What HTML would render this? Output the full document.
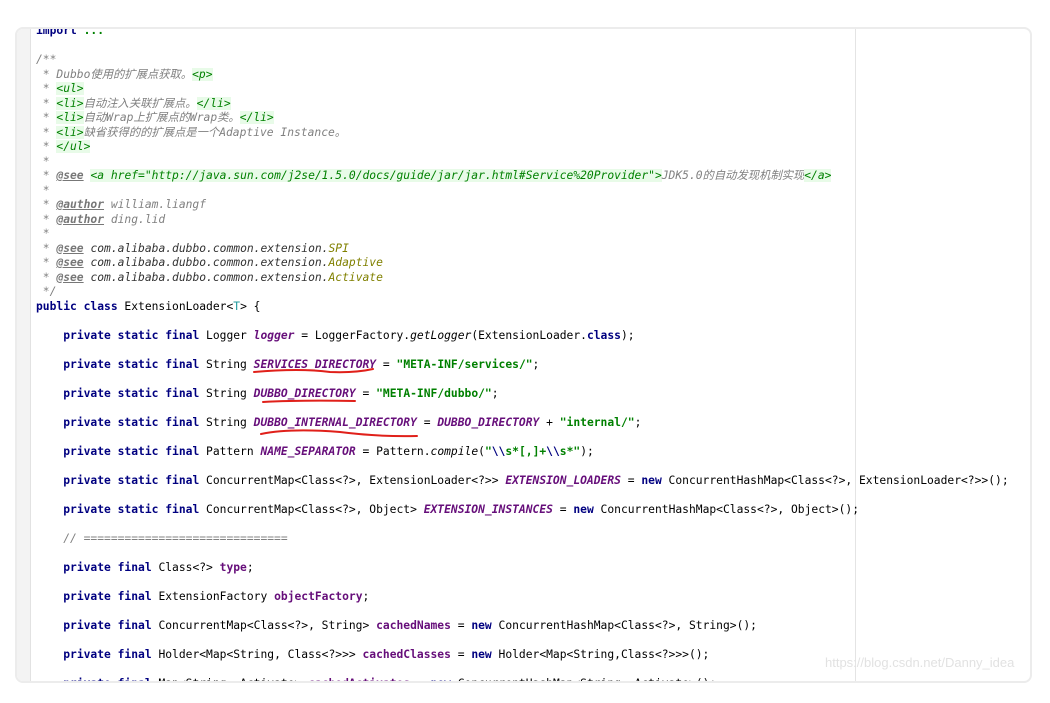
<!DOCTYPE html>
<html><head><meta charset="utf-8"><style>
html,body{margin:0;padding:0;background:#fff;width:1050px;height:703px;overflow:hidden}
.card{position:absolute;left:15px;top:27px;width:1013px;height:652px;border:2px solid #ececec;border-radius:8px;overflow:hidden;background:#fff}
.gut{position:absolute;left:0;top:0;width:13px;height:100%;background:#f3f3f3;border-right:1px solid #e2e2e2}
.rm{position:absolute;left:838px;top:0;width:1px;height:100%;background:#e4e4e4}
pre{position:absolute;left:19px;top:-5px;margin:0;font-family:"DejaVu Sans Mono","Liberation Mono","Noto Sans CJK SC",monospace;font-size:11.3px;line-height:14.5px;color:#000}
.k{color:#000080;font-weight:bold}
.c{color:#808080;font-style:italic}
.t{color:#008000;background:#e8fbe8;font-style:italic}
.tg{color:#777;font-style:italic;font-weight:bold;text-decoration:underline}
.cn{color:#660e7a;font-style:italic;font-weight:bold}
.s{color:#008000;font-weight:bold}
.f{color:#660e7a;font-weight:bold}
.y{color:#808000;font-style:italic}
.i{font-style:italic}
.wm{position:absolute;left:808px;top:626px;font-family:"Liberation Sans",sans-serif;font-size:13px;color:#e2e2e2}
</style></head><body>
<div class="card">
<div class="gut"></div><div class="rm"></div>
<pre><span class="k">import</span> <span class="s">...</span>

<span class="c">/**</span>
<span class="c"> * Dubbo使用的扩展点获取。<span class="t">&lt;p&gt;</span></span>
<span class="c"> * <span class="t">&lt;ul&gt;</span></span>
<span class="c"> * <span class="t">&lt;li&gt;</span>自动注入关联扩展点。<span class="t">&lt;/li&gt;</span></span>
<span class="c"> * <span class="t">&lt;li&gt;</span>自动Wrap上扩展点的Wrap类。<span class="t">&lt;/li&gt;</span></span>
<span class="c"> * <span class="t">&lt;li&gt;</span>缺省获得的的扩展点是一个Adaptive Instance。</span>
<span class="c"> * <span class="t">&lt;/ul&gt;</span></span>
<span class="c"> *</span>
<span class="c"> * <span class="tg">@see</span> <span class="t">&lt;a href="http://java.sun.com/j2se/1.5.0/docs/guide/jar/jar.html#Service%20Provider"&gt;</span>JDK5.0的自动发现机制实现<span class="t">&lt;/a&gt;</span></span>
<span class="c"> *</span>
<span class="c"> * <span class="tg">@author</span> william.liangf</span>
<span class="c"> * <span class="tg">@author</span> ding.lid</span>
<span class="c"> *</span>
<span class="c"> * <span class="tg">@see</span> <span style="color:#333">com.alibaba.dubbo.common.extension.</span><span class="y">SPI</span></span>
<span class="c"> * <span class="tg">@see</span> <span style="color:#333">com.alibaba.dubbo.common.extension.</span><span class="y">Adaptive</span></span>
<span class="c"> * <span class="tg">@see</span> <span style="color:#333">com.alibaba.dubbo.common.extension.</span><span class="y">Activate</span></span>
<span class="c"> */</span>
<span class="k">public class</span> ExtensionLoader&lt;<span style="color:#20999d">T</span>&gt; {

    <span class="k">private static final</span> Logger <span class="cn">logger</span> = LoggerFactory.<span class="i">getLogger</span>(ExtensionLoader.<span class="k">class</span>);

    <span class="k">private static final</span> String <span class="cn">SERVICES_DIRECTORY</span> = <span class="s">"META-INF/services/"</span>;

    <span class="k">private static final</span> String <span class="cn">DUBBO_DIRECTORY</span> = <span class="s">"META-INF/dubbo/"</span>;

    <span class="k">private static final</span> String <span class="cn">DUBBO_INTERNAL_DIRECTORY</span> = <span class="cn">DUBBO_DIRECTORY</span> + <span class="s">"internal/"</span>;

    <span class="k">private static final</span> Pattern <span class="cn">NAME_SEPARATOR</span> = Pattern.<span class="i">compile</span>(<span class="s">"<span class="k">\\</span>s*[,]+<span class="k">\\</span>s*"</span>);

    <span class="k">private static final</span> ConcurrentMap&lt;Class&lt;?&gt;, ExtensionLoader&lt;?&gt;&gt; <span class="cn">EXTENSION_LOADERS</span> = <span class="k">new</span> ConcurrentHashMap&lt;Class&lt;?&gt;, ExtensionLoader&lt;?&gt;&gt;();

    <span class="k">private static final</span> ConcurrentMap&lt;Class&lt;?&gt;, Object&gt; <span class="cn">EXTENSION_INSTANCES</span> = <span class="k">new</span> ConcurrentHashMap&lt;Class&lt;?&gt;, Object&gt;();

    <span class="c">// ==============================</span>

    <span class="k">private final</span> Class&lt;?&gt; <span class="f">type</span>;

    <span class="k">private final</span> ExtensionFactory <span class="f">objectFactory</span>;

    <span class="k">private final</span> ConcurrentMap&lt;Class&lt;?&gt;, String&gt; <span class="f">cachedNames</span> = <span class="k">new</span> ConcurrentHashMap&lt;Class&lt;?&gt;, String&gt;();

    <span class="k">private final</span> Holder&lt;Map&lt;String, Class&lt;?&gt;&gt;&gt; <span class="f">cachedClasses</span> = <span class="k">new</span> Holder&lt;Map&lt;String,Class&lt;?&gt;&gt;&gt;();

    <span class="k">private final</span> Map&lt;String, Activate&gt; <span class="f">cachedActivates</span> = <span class="k">new</span> ConcurrentHashMap&lt;String, Activate&gt;();
</pre>
<div class="wm">https://blog.csdn.net/Danny_idea</div>
</div>
<svg width="1050" height="703" style="position:absolute;left:0;top:0" fill="none" stroke="#e0201a" stroke-width="2" stroke-linecap="round">
<path d="M254 372 Q300 368 330 372 Q355 373 373 369"/>
<path d="M263 402 Q300 400 355 401"/>
<path d="M261 434 Q290 428 340 432 Q380 437 417 436"/>
</svg>
</body></html>
